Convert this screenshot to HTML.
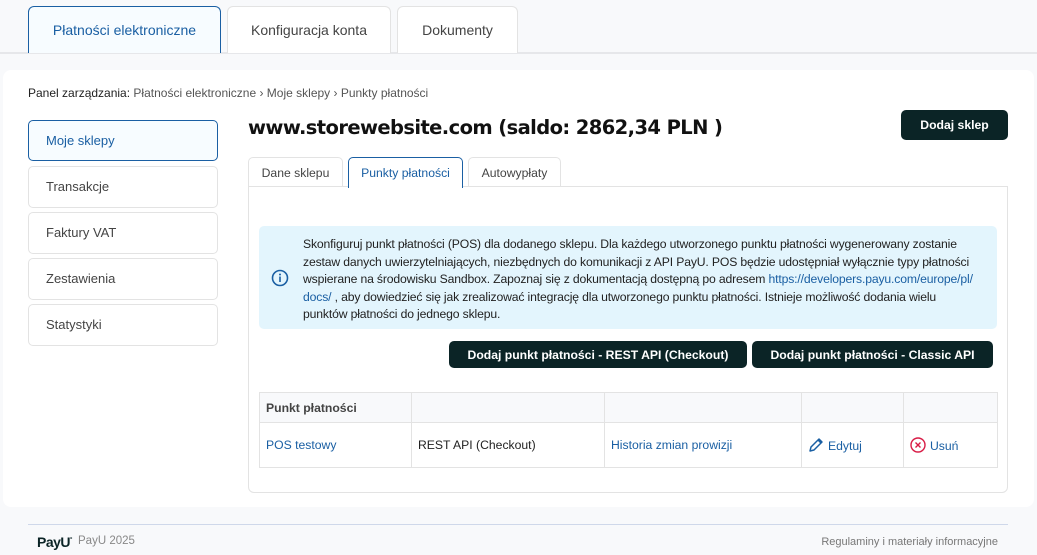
<!DOCTYPE html>
<html><head><meta charset="utf-8"><style>
*{box-sizing:border-box;margin:0;padding:0}
body{width:1037px;height:555px;background:#f8f9fb;font-family:"Liberation Sans",Arial,sans-serif;font-size:13px;color:#333;position:relative;overflow:hidden}
.a{position:absolute}
.tab{position:absolute;top:6px;height:47px;background:#fff;border:1px solid #e3e3e3;border-bottom:none;border-radius:6px 6px 0 0;font-size:14px;color:#444;display:flex;align-items:center;justify-content:center}
.tab.on{border-color:#1a5fa3;color:#1a5fa3;background:#f7fcff}
.card{position:absolute;left:3px;top:70px;width:1031px;height:437px;background:#fff;border-radius:8px}
.side{position:absolute;left:28px;width:190px;height:42px;border:1px solid #e3e3e3;border-radius:5px;padding-left:17px;line-height:40px;font-size:13px;color:#444;background:#fff}
.side.on{border-color:#1a5fa3;color:#1a5fa3;background:#f7fcff}
.btn{position:absolute;background:#0b2426;color:#fff;font-weight:bold;font-size:12.2px;border-radius:5px;display:flex;align-items:center;justify-content:center}
.it{position:absolute;top:157px;height:30px;border:1px solid #e3e3e3;border-bottom:none;border-radius:5px 5px 0 0;background:#fff;font-size:12.2px;color:#444;display:flex;align-items:center;justify-content:center}
.it.on{border-color:#1a5fa3;color:#1a5fa3;height:31px;z-index:2}
.lk{color:#1a5fa3}
td{border:1px solid #e3e3e3;padding:0 6px;font-size:12.2px}
</style></head><body>
<div class="a" style="left:0;top:52px;width:1037px;height:2px;background:#e6e7ea"></div>
<div class="tab on" style="left:28px;width:193px">Płatności elektroniczne</div>
<div class="tab" style="left:227px;width:164px">Konfiguracja konta</div>
<div class="tab" style="left:397px;width:121px">Dokumenty</div>
<div class="card"></div>
<div class="a" style="left:28px;top:86px;font-size:12px;color:#555"><span style="color:#222">Panel zarządzania:</span> Płatności elektroniczne › Moje sklepy › Punkty płatności</div>
<div class="side on" style="top:120px;height:41px">Moje sklepy</div>
<div class="side" style="top:166px">Transakcje</div>
<div class="side" style="top:212px">Faktury VAT</div>
<div class="side" style="top:258px">Zestawienia</div>
<div class="side" style="top:304px">Statystyki</div>
<div class="a" style="left:248px;top:116px;font-family:'DejaVu Sans',sans-serif;font-weight:bold;font-size:19.5px;letter-spacing:-0.6px;color:#111">www.storewebsite.com (saldo: 2862,34 PLN )</div>
<div class="btn" style="left:901px;top:110px;width:107px;height:30px">Dodaj sklep</div>
<div class="it" style="left:248px;width:95px">Dane sklepu</div>
<div class="it on" style="left:348px;width:115px">Punkty płatności</div>
<div class="it" style="left:468px;width:93px">Autowypłaty</div>
<div class="a" style="left:248px;top:186px;width:760px;height:307px;border:1px solid #e3e3e3;border-radius:0 0 6px 6px"></div>
<div class="a" style="left:259px;top:226px;width:738px;height:103px;background:#e3f5fd;border-radius:5px"></div>
<svg class="a" style="left:271px;top:269px" width="18" height="18" viewBox="0 0 18 18"><circle cx="9" cy="9" r="7.5" fill="none" stroke="#1a5fa3" stroke-width="1.6"/><circle cx="9" cy="5.5" r="1" fill="#1a5fa3"/><rect x="8.2" y="7.5" width="1.6" height="5.5" fill="#1a5fa3"/></svg>
<div class="a" style="left:303px;top:236px;width:679px;font-size:12.2px;letter-spacing:-0.15px;line-height:17.5px;color:#222">Skonfiguruj punkt płatności (POS) dla dodanego sklepu. Dla każdego utworzonego punktu płatności wygenerowany zostanie zestaw danych uwierzytelniających, niezbędnych do komunikacji z API PayU. POS będzie udostępniał wyłącznie typy płatności wspierane na środowisku Sandbox. Zapoznaj się z dokumentacją dostępną po adresem <span class="lk">https://developers.payu.com/europe/pl/ docs/</span> , aby dowiedzieć się jak zrealizować integrację dla utworzonego punktu płatności. Istnieje możliwość dodania wielu punktów płatności do jednego sklepu.</div>
<div class="btn" style="left:449px;top:341px;width:298px;height:27px">Dodaj punkt płatności - REST API (Checkout)</div>
<div class="btn" style="left:752px;top:341px;width:241px;height:27px">Dodaj punkt płatności - Classic API</div>
<table class="a" style="left:259px;top:392px;width:739px;border-collapse:collapse">
<tr style="height:30px;background:#f8f9fb"><td style="width:152px;font-weight:bold;color:#444">Punkt płatności</td><td style="width:193px"></td><td style="width:197px"></td><td style="width:102px"></td><td></td></tr>
<tr style="height:45px"><td class="lk">POS testowy</td><td style="color:#222">REST API (Checkout)</td><td class="lk">Historia zmian prowizji</td>
<td class="lk"><svg width="16" height="16" viewBox="0 0 16 16" style="vertical-align:-3px;margin-right:4px"><path d="M2 14l1-4 8-8 3 3-8 8z M10 3l3 3" fill="none" stroke="#1a5fa3" stroke-width="1.5" stroke-linejoin="round"/></svg>Edytuj</td>
<td class="lk"><svg width="16" height="16" viewBox="0 0 16 16" style="vertical-align:-3px;margin-right:4px"><circle cx="8" cy="8" r="7" fill="none" stroke="#d81b45" stroke-width="1.4"/><path d="M5.5 5.5l5 5M10.5 5.5l-5 5" stroke="#d81b45" stroke-width="1.4"/></svg>Usuń</td></tr>
</table>
<div class="a" style="left:28px;top:524px;width:980px;height:1px;background:#cfd8ea"></div>
<div class="a" style="left:37px;top:534px;font-size:14px;font-weight:bold;color:#0b2426;letter-spacing:-0.5px">PayU<sup style="font-size:6px">°</sup></div>
<div class="a" style="left:78px;top:535px;font-size:11.5px;color:#888">PayU 2025</div>
<div class="a" style="right:39px;top:536px;font-size:11px;color:#777">Regulaminy i materiały informacyjne</div>
</body></html>
